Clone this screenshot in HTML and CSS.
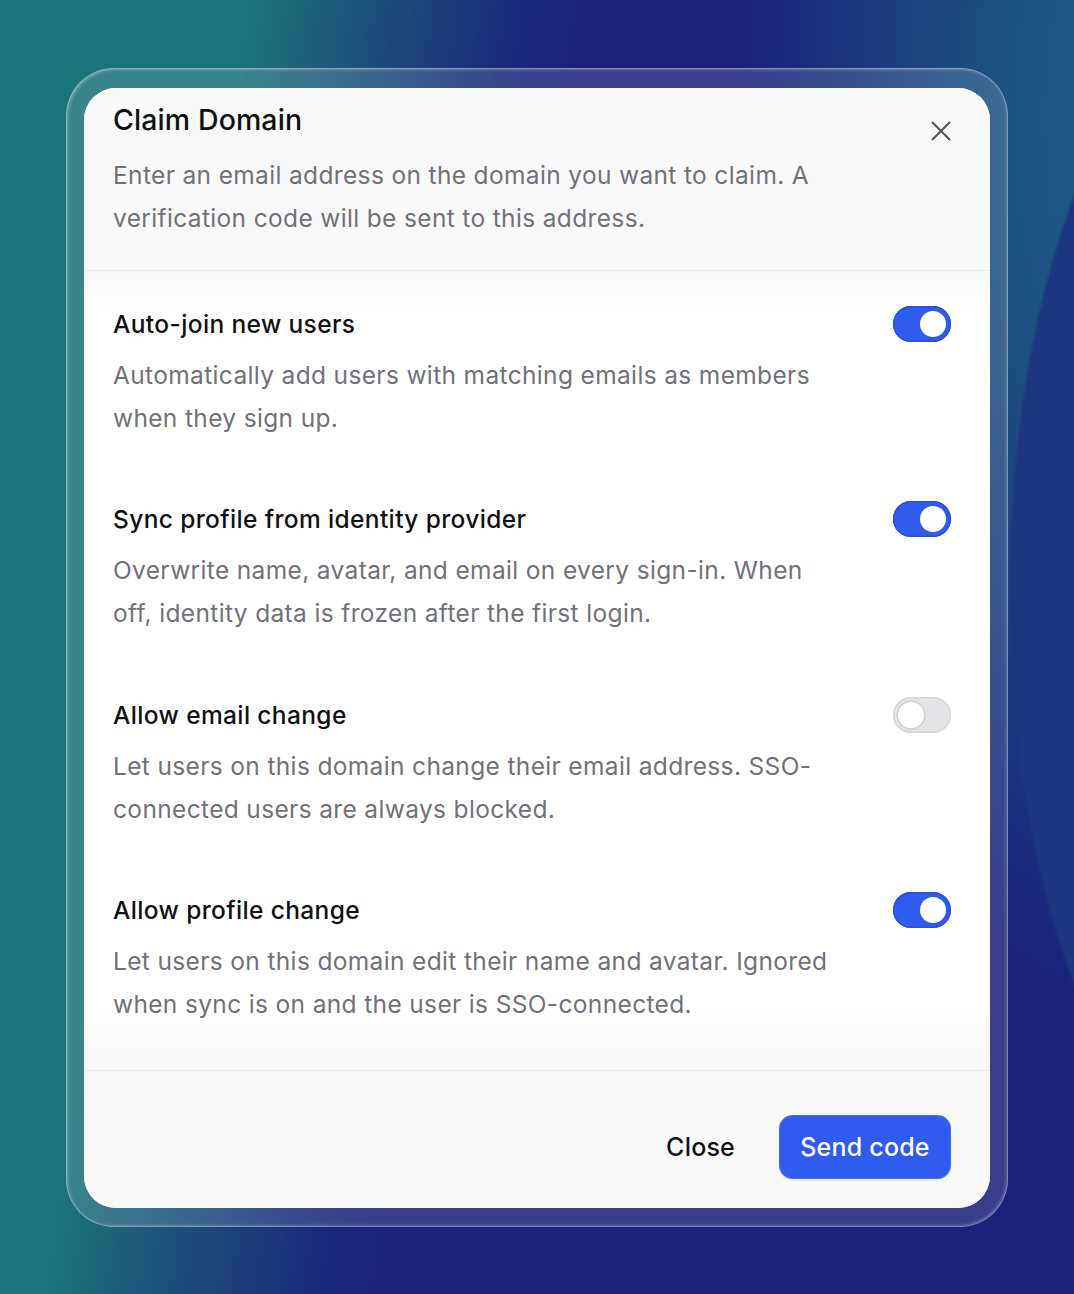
FILE: index.html
```html
<!DOCTYPE html>
<html lang="en">
<head>
<meta charset="utf-8">
<title>Claim Domain</title>
<link rel="stylesheet" href="styles.css">
</head>
<body>
<main class="stage">
  <div class="glass">
    <section class="dialog" role="dialog" aria-labelledby="dlg-title">
      <header class="dialog-head">
        <div class="head-text">
          <h1 id="dlg-title" class="dialog-title">Claim Domain</h1>
          <p class="dialog-desc">Enter an email address on the domain you want to claim. A verification code will be sent to this address.</p>
        </div>
        <button class="close-x" aria-label="Close">
          <svg viewBox="0 0 22 22" width="22" height="22" fill="none" stroke="currentColor" stroke-width="2" stroke-linecap="round">
            <path d="M2.5 2.5 L19.5 19.5 M19.5 2.5 L2.5 19.5"/>
          </svg>
        </button>
      </header>

      <div class="dialog-body">
        <div class="setting">
          <div class="setting-text">
            <h2 class="setting-title">Auto-join new users</h2>
            <p class="setting-desc">Automatically add users with matching emails as members when they sign up.</p>
          </div>
          <span class="switch on" role="switch" aria-checked="true"><span class="knob"></span></span>
        </div>
        <div class="setting">
          <div class="setting-text">
            <h2 class="setting-title">Sync profile from identity provider</h2>
            <p class="setting-desc">Overwrite name, avatar, and email on every sign-in. When off, identity data is frozen after the first login.</p>
          </div>
          <span class="switch on" role="switch" aria-checked="true"><span class="knob"></span></span>
        </div>
        <div class="setting">
          <div class="setting-text">
            <h2 class="setting-title">Allow email change</h2>
            <p class="setting-desc">Let users on this domain change their email address. SSO-connected users are always blocked.</p>
          </div>
          <span class="switch" role="switch" aria-checked="false"><span class="knob"></span></span>
        </div>
        <div class="setting">
          <div class="setting-text">
            <h2 class="setting-title">Allow profile change</h2>
            <p class="setting-desc">Let users on this domain edit their name and avatar. Ignored when sync is on and the user is SSO-connected.</p>
          </div>
          <span class="switch on" role="switch" aria-checked="true"><span class="knob"></span></span>
        </div>
      </div>

      <footer class="dialog-foot">
        <button class="btn btn-ghost">Close</button>
        <button class="btn btn-primary">Send code</button>
      </footer>
    </section>
  </div>
</main>
</body>
</html>
```

FILE: styles.css
```css
* { box-sizing: border-box; }

html, body {
  margin: 0;
  padding: 0;
}

body {
  font-family: Inter, "Noto Sans", "Liberation Sans", sans-serif;
  width: 1074px;
  height: 1294px;
  overflow: hidden;
  background:
    /* blue swell along the right edge */
    radial-gradient(ellipse 250px 590px at 1258px 590px, #1c3a80 0%, #1c367f 98.6%, rgba(28,54,127,0) 100%),
    /* teal glow in the upper right corner */
    radial-gradient(ellipse 420px 900px at 1160px 120px, rgba(29,98,132,1) 0%, rgba(29,98,132,0.75) 40%, rgba(29,98,132,0) 100%),
    /* teal to navy sweep */
    linear-gradient(99deg, #1b7479 0%, #1b7479 19.5%, #1c4d7c 30%, #1b2b7b 40%, #1b217b 46%, #1b217b 100%);
}

.stage {
  width: 1074px;
  height: 1294px;
  display: flex;
  align-items: center;
  justify-content: center;
}

/* frosted frame around the dialog */
.glass {
  width: 942px;
  height: 1159px;
  padding: 20px 18px 19px 18px;
  border-radius: 48px;
  background: rgba(255, 255, 255, 0.13);
  box-shadow:
    inset 0 0 0 1px rgba(255, 255, 255, 0.22),
    inset 2px 2px 3px rgba(255, 255, 255, 0.28),
    inset -2px -2px 3px rgba(255, 255, 255, 0.2);
}

.dialog {
  width: 906px;
  height: 1120px;
  border-radius: 32px;
  overflow: hidden;
  background: #ffffff;
  display: flex;
  flex-direction: column;
}

/* header */
.dialog-head {
  display: flex;
  align-items: flex-start;
  padding: 14px 38px 0 29px;
  height: 183px;
  background: #f9f9f9;
  border-bottom: 1px solid #ebebeb;
}

.head-text {
  flex: 1;
  max-width: 730px;
}

.dialog-title {
  margin: 0;
  font-size: 28.5px;
  line-height: 36px;
  font-weight: 500;
  color: #111113;
  letter-spacing: 0.1px;
}

.dialog-desc {
  margin: 16px 0 0;
  font-size: 24.5px;
  line-height: 43px;
  color: #71717a;
  letter-spacing: 0.35px;
}

.close-x {
  margin-left: auto;
  margin-top: 18px;
  width: 22px;
  height: 22px;
  padding: 0;
  border: 0;
  background: none;
  color: #52525b;
  display: flex;
}

.close-x svg { width: 22px; height: 22px; }

/* body with settings */
.dialog-body {
  flex: 1;
  padding: 37px 39px 0 29px;
  background: linear-gradient(180deg, #f9f9f9 0px, #ffffff 40px, #ffffff calc(100% - 70px), #f9f9f9 100%);
  display: flex;
  flex-direction: column;
  gap: 63.5px;
}

.setting {
  display: flex;
  align-items: flex-start;
  justify-content: space-between;
}

.setting-text {
  max-width: 730px;
}

.setting-title {
  margin: 0;
  font-size: 24.5px;
  line-height: 32px;
  font-weight: 500;
  color: #111113;
  letter-spacing: 0.37px;
}

.setting-desc {
  margin: 14px 0 0;
  font-size: 24.5px;
  line-height: 43px;
  color: #71717a;
  letter-spacing: 0.35px;
}

/* toggle switch */
.switch {
  flex: none;
  position: relative;
  width: 58px;
  height: 36px;
  margin-top: -2px;
  border-radius: 18px;
  background: #e4e4e7;
  box-shadow: inset 0 0 0 1.5px #d6d6da;
}

.switch .knob {
  position: absolute;
  top: 5px;
  left: 5px;
  width: 26px;
  height: 26px;
  border-radius: 50%;
  background: #ffffff;
  box-shadow: 0 0 0 1.5px #d0d0d4, 0 1px 2px rgba(0, 0, 0, 0.1);
}

.switch.on {
  background: #2f5bef;
  box-shadow: inset 0 0 0 1.5px #2a52dd;
}

.switch.on .knob {
  left: auto;
  right: 5px;
  box-shadow: none;
}

/* footer */
.dialog-foot {
  flex: none;
  height: 138px;
  padding: 44px 39px 0 0;
  display: flex;
  align-items: flex-start;
  justify-content: flex-end;
  gap: 44px;
  background: #f9f9f9;
  border-top: 1px solid #ebebeb;
}

.btn {
  font-family: inherit;
  font-size: 25px;
  font-weight: 500;
  height: 64px;
  border: 0;
  border-radius: 14px;
  padding: 0;
  cursor: pointer;
  letter-spacing: 0.2px;
}

.btn-ghost {
  background: none;
  color: #111113;
}

.btn-primary {
  width: 172px;
  background: #2f5bef;
  color: #ffffff;
  box-shadow: inset 0 0 0 1px rgba(255, 255, 255, 0.12), 0 1px 2px rgba(0, 0, 0, 0.12);
}
```
